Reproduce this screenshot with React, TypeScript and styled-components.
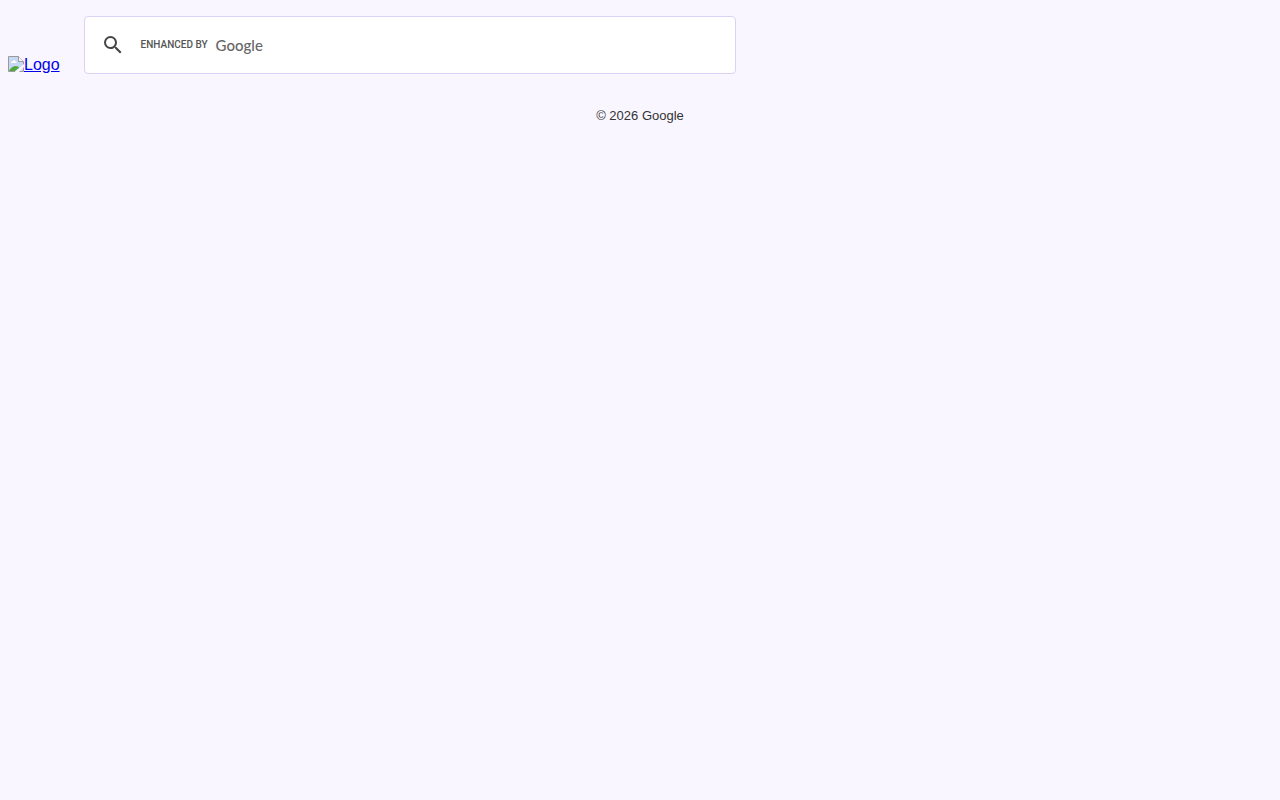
import React, { useState } from "react";
import styled, { createGlobalStyle } from "styled-components";

const GlobalStyle = createGlobalStyle`
  body {
    margin: 0;
    background: #f9f6ff;
    color: #333;
    font-family: "Liberation Sans", Arial, sans-serif;
  }
`;

const Header = styled.header`
  display: flex;
  align-items: flex-end;
  gap: 24px;
  padding: 16px 8px 0;
`;

const LogoLink = styled.a`
  display: flex;
  align-items: flex-start;
  color: #0000ee;
  font-size: 16px;
  line-height: 18px;
  text-decoration: underline;
`;

const SearchForm = styled.form`
  box-sizing: border-box;
  display: flex;
  align-items: center;
  gap: 16px;
  flex: 0 1 652px;
  height: 58px;
  padding: 0 16px;
  background: #fff;
  border: 1px solid #dcd2f5;
  border-radius: 4px;
`;

const SearchButton = styled.button`
  display: flex;
  padding: 0;
  border: 0;
  background: none;
  color: #444;
  cursor: pointer;
`;

const Field = styled.div`
  position: relative;
  flex: 1;
  display: flex;
`;

const SearchInput = styled.input`
  flex: 1;
  min-width: 0;
  height: 40px;
  padding: 0;
  border: 0;
  outline: 0;
  background: transparent;
  color: #333;
  font: 16px "Liberation Sans", Arial, sans-serif;
`;

const Watermark = styled.span`
  position: absolute;
  inset: 0 auto 0 0;
  display: flex;
  align-items: center;
  gap: 8px;
  color: #666;
  pointer-events: none;
`;

const Enhanced = styled.span`
  font: 500 10px/16px Roboto, sans-serif;
  color: #555;
`;

const Wordmark = styled.span`
  font: 500 15px/16px Lato, sans-serif;
`;

const Footer = styled.footer`
  padding: 32px 8px;
  font-size: 13px;
  line-height: 20px;
  text-align: center;
`;

function BrokenImage() {
  return (
    <svg width="16" height="16" viewBox="0 0 16 16" aria-hidden="true">
      <path d="M.5.5h10l5 5v10H.5z" fill="#c6d8f5" />
      <path d="M3 7c0-1.200.8-1.800 1.700-1.600C5 3.800 7.300 3.800 7.600 5.400c1.200 0 1.500 1.200.6 1.600z" fill="#fff" />
      <path d="M1 15c1-2.500 3.500-4.800 6.500-5 1.800 0 3 .8 3.700 1.800L7 15z" fill="#4fa83d" />
      <path d="M.5 15.500V.5h10l5 5v10z" fill="none" stroke="#9a9a9a" />
      <path d="M10.500.5v5h5" fill="#f7f7f7" stroke="#9a9a9a" />
      <path d="M16 8v3l-5 5H6.500z" fill="#f9f6ff" />
    </svg>
  );
}

function SearchIcon() {
  return (
    <svg width="24" height="24" viewBox="0 0 24 24" fill="currentColor" aria-hidden="true">
      <path d="M15.500 14h-.79l-.28-.27A6.471 6.471 0 0 0 16 9.500 6.500 6.500 0 1 0 9.500 16c1.610 0 3.090-.59 4.230-1.570l.27.28v.79l5 4.990L20.490 19l-4.990-5zm-6 0C7.010 14 5 11.990 5 9.500S7.010 5 9.500 5 14 7.010 14 9.500 11.990 14 9.500 14z" />
    </svg>
  );
}

export default function App() {
  const [query, setQuery] = useState("");
  return (
    <>
      <GlobalStyle />
      <Header>
        <LogoLink href="#">
          <BrokenImage />
          Logo
        </LogoLink>
        <SearchForm role="search" onSubmit={(e: React.FormEvent) => e.preventDefault()}>
          <SearchButton type="submit" aria-label="Search">
            <SearchIcon />
          </SearchButton>
          <Field>
            <SearchInput
              type="text"
              aria-label="Search query"
              value={query}
              onChange={(e: React.ChangeEvent<HTMLInputElement>) => setQuery(e.target.value)}
            />
            {query === "" && (
              <Watermark>
                <Enhanced>ENHANCED BY</Enhanced>
                <Wordmark>Google</Wordmark>
              </Watermark>
            )}
          </Field>
        </SearchForm>
      </Header>
      <Footer>© 2026 Google</Footer>
    </>
  );
}
